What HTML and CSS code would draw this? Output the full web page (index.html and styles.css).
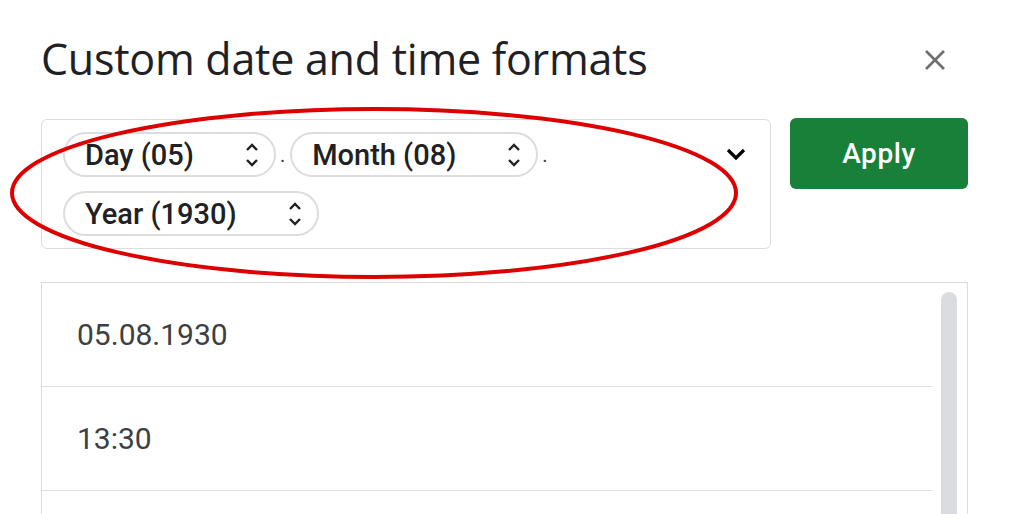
FILE: index.html
```html
<!DOCTYPE html>
<html>
<head>
  <title>Custom date and time formats</title>
  <link rel="stylesheet" href="styles.css">
</head>
<body>
  <div class="dialog">
    <div class="header">
      <h1>Custom date and time formats</h1>
      <button class="close-button" aria-label="Close">
        <svg width="22" height="22" viewBox="0 0 22 22"><path d="M2 2L20 20M20 2L2 20" stroke="#6e6e6e" stroke-width="2.6" fill="none"/></svg>
      </button>
    </div>

    <div class="format-row">
      <div class="format-box">
        <div class="chips">
          <span class="chip">Day (05)<svg class="updown" width="14" height="26" viewBox="0 0 14 26"><path d="M2 8L7 3L12 8M2 18L7 23L12 18" stroke="#202124" stroke-width="2.4" fill="none"/></svg></span>
          <span class="sep">.</span>
          <span class="chip">Month (08)<svg class="updown" width="14" height="26" viewBox="0 0 14 26"><path d="M2 8L7 3L12 8M2 18L7 23L12 18" stroke="#202124" stroke-width="2.4" fill="none"/></svg></span>
          <span class="sep">.</span>
          <span class="chip">Year (1930)<svg class="updown" width="14" height="26" viewBox="0 0 14 26"><path d="M2 8L7 3L12 8M2 18L7 23L12 18" stroke="#202124" stroke-width="2.4" fill="none"/></svg></span>
        </div>
        <svg class="dropdown" width="20" height="12" viewBox="0 0 20 12"><path d="M2 2L10 10L18 2" stroke="#000" stroke-width="3.2" fill="none"/></svg>
      </div>
      <button class="apply-button">Apply</button>
    </div>

    <div class="list">
      <div class="list-items">
        <div class="list-item">05.08.1930</div>
        <div class="list-item">13:30</div>
        <div class="list-item"></div>
      </div>
      <div class="scrollbar"><div class="thumb"></div></div>
    </div>

    <!-- marcação vermelha em volta dos chips -->
    <svg class="highlight" width="760" height="190" viewBox="0 0 760 190">
      <ellipse cx="374" cy="92" rx="362" ry="84" stroke="#dd0000" stroke-width="4" fill="none"/>
    </svg>
  </div>
</body>
</html>
```

FILE: styles.css
```css
body {
  margin: 0;
  padding: 0;
  background: #fff;
  font-family: Roboto, "Liberation Sans", sans-serif;
  overflow: hidden;
}

.dialog {
  position: relative;
  padding: 28px 42px 0 41px;
}

.header {
  display: flex;
  align-items: center;
  justify-content: space-between;
  height: 60px;
  margin-bottom: 31px;
}

h1 {
  margin: 0;
  font-family: "Open Sans", sans-serif;
  font-weight: 400;
  font-size: 43px;
  color: #202124;
  letter-spacing: -0.25px;
}

.close-button {
  border: none;
  background: none;
  padding: 0;
  margin-right: 22px;
  margin-top: 4px;
  width: 22px;
  height: 22px;
}

.format-row {
  display: flex;
  gap: 19px;
  align-items: flex-start;
}

.format-box {
  width: 730px;
  height: 130px;
  box-sizing: border-box;
  border: 1.5px solid #dadce0;
  border-radius: 6px;
  display: flex;
  padding: 12px 0 0 21px;
}

.chips {
  display: flex;
  flex: 1;
  flex-wrap: wrap;
  align-content: flex-start;
  row-gap: 14px;
}

.chip {
  display: flex;
  align-items: center;
  height: 45px;
  box-sizing: border-box;
  border: 2px solid #dcdde0;
  border-radius: 23px;
  padding: 0 15px 0 20px;
  font-size: 29px;
  font-weight: 500;
  color: #202124;
}

.updown {
  margin-left: 51px;
}

.sep {
  display: flex;
  align-items: flex-end;
  height: 45px;
  padding: 0 5px 10px 4px;
  box-sizing: border-box;
  font-size: 20px;
  color: #3c4043;
}

.dropdown {
  margin-top: 16px;
  margin-right: 24px;
}

.apply-button {
  width: 178px;
  height: 71px;
  margin-top: -1px;
  border: none;
  border-radius: 6px;
  background-color: #188038;
  color: #fff;
  font-family: Roboto, sans-serif;
  font-size: 28px;
  font-weight: 500;
  letter-spacing: 0.6px;
}

.list {
  display: flex;
  margin-top: 33px;
  border: 1.5px solid #dadce0;
  border-bottom: none;
  height: 240px;
}

.list-items {
  flex: 1;
}

.list-item {
  height: 104px;
  box-sizing: border-box;
  border-bottom: 1.5px solid #e0e0e0;
  display: flex;
  align-items: center;
  padding-left: 35px;
  font-size: 30px;
  color: #3c4043;
}

.scrollbar {
  width: 35px;
  padding: 9px 0 0 9px;
  box-sizing: border-box;
}

.thumb {
  width: 16px;
  height: 240px;
  border-radius: 8px;
  background-color: #dadce0;
}

.highlight {
  position: absolute;
  left: 0;
  top: 101px;
}
```
